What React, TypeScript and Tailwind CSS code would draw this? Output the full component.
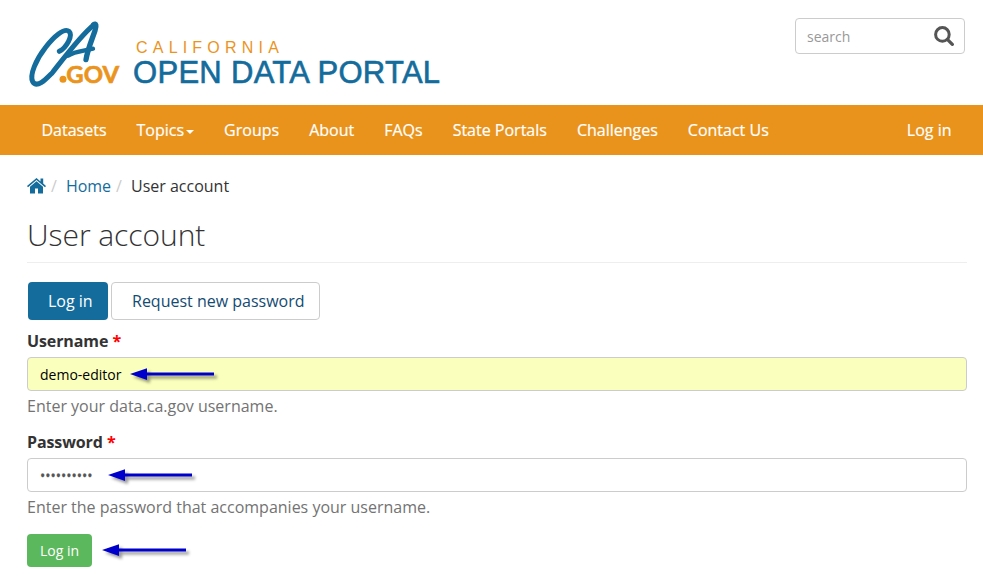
import React from 'react';

const navItems = ['Datasets', 'Topics', 'Groups', 'About', 'FAQs', 'State Portals', 'Challenges', 'Contact Us'];

function Logo() {
  return (
    <svg className="h-[80px] w-[100px]" viewBox="0 0 300 240" fill="none">
      <g stroke="#146c9c" strokeLinecap="round" strokeLinejoin="round">
        <path d="M103 109C124 98 145 62 132 49C118 37 85 67 62 97C33 134 13 180 23 200C37 222 65 190 82 173C125 118 170 58 207 29" strokeWidth="15" />
        <path d="M206 29C213 24 215 32 210 47C201 74 188 102 183 134" strokeWidth="16" />
        <path d="M129 122C148 109 174 108 204 101" strokeWidth="13" />
      </g>
      <circle cx="114" cy="193" r="10.5" fill="#eb941d" />
      <text x="124" y="203" textLength="158" lengthAdjust="spacingAndGlyphs" fill="#eb941d" stroke="#eb941d" strokeWidth="2" className="font-['Lato',sans-serif] text-[71px] font-bold">GOV</text>
    </svg>
  );
}

function Arrow() {
  return (
    <svg className="h-[20px] w-[92px]" viewBox="0 0 92 20" style={{ filter: 'drop-shadow(3px 3px 1.5px rgba(0,0,0,.4))' }}>
      <path d="M0 10L17 4.3V8.5H84V11.5H17V16Z" fill="#0000cc" />
    </svg>
  );
}

function HomeIcon() {
  return (
    <svg className="relative -top-px h-[16px] w-[19px] fill-[#146c9c]" viewBox="0 0 19 16">
      <path d="M9.5 3.3L3 8.8V15.5H8V10.5H11V15.5H16V8.8Z" />
      <path d="M9.5 0L0 8L1 9.2L9.5 2L18 9.2L19 8L16.2 5.6V0.5H13.5V3.4Z" />
    </svg>
  );
}

export default function App() {
  return (
    <div className="h-[583px] w-full overflow-hidden bg-white font-['Open_Sans','Noto_Sans',sans-serif] text-[16px] leading-[23px] text-[#333]">
      <header className="flex h-[105px] items-start justify-between pr-[18px] pl-[25px]">
        <div className="flex pt-[15px]">
          <Logo />
          <div className="ml-[8px] pt-[24px] font-['Liberation_Sans',Arial,sans-serif] whitespace-nowrap">
            <div className="ml-[3px] h-[17px] text-[16px] leading-[18px] tracking-[5.2px] text-[#eb941d]">CALIFORNIA</div>
            <div className="h-[34px] text-[31px] leading-[34px] tracking-[0.3px] text-[#146c9c] [-webkit-text-stroke:0.6px_#146c9c]">OPEN DATA PORTAL</div>
          </div>
        </div>
        <div className="mt-[18px] flex h-[36px] w-[170px] items-center justify-between rounded-[4px] border border-[#ccc] pr-[10px] pl-[11px]">
          <span className="text-[14px] text-[#999]">search</span>
          <svg className="h-[20px] w-[20px]" viewBox="0 0 20 20" fill="none" stroke="#555" strokeLinecap="round">
            <circle cx="8.4" cy="8.4" r="6.8" strokeWidth="3" />
            <path d="M13.6 13.6L18.3 18.3" strokeWidth="3.3" />
          </svg>
        </div>
      </header>

      <nav className="flex h-[50px] items-center justify-between bg-[#e9931c] pr-[31.5px] pl-[41.5px] text-white [-webkit-text-stroke:0.2px_white]">
        <ul className="flex gap-[30px] whitespace-nowrap">
          {navItems.map((item) => (
            <li key={item} className="flex items-center">
              {item}
              {item === 'Topics' && <span className="mt-[4px] ml-[2px] border-x-4 border-t-4 border-x-transparent border-t-white" />}
            </li>
          ))}
        </ul>
        <a>Log in</a>
      </nav>

      <main className="pr-[16px] pl-[27px]">
        <div className="mt-[20px] flex h-[23px] items-center">
          <HomeIcon />
          <span className="ml-[5px] text-[#ccc]">/</span>
          <a className="ml-[9px] text-[#146c9c]">Home</a>
          <span className="ml-[5px] text-[#ccc]">/</span>
          <span className="ml-[9px]">User account</span>
        </div>
        <h1 className="mt-[17px] h-[48px] border-b border-[#eee] text-[30px] leading-[40px] font-light tracking-[-0.05px]">User account</h1>

        <div className="mt-[19px] ml-px flex h-[38px] gap-[3px]">
          <a className="flex w-[80px] items-center rounded-[4px] bg-[#146c9c] pl-[20px] text-white">Log in</a>
          <a className="flex w-[209px] items-center rounded-[4px] border border-[#ccc] pl-[20px] text-[#134b73]">Request new password</a>
        </div>

        <form>
          <div className="mt-[10px] font-bold tracking-[-0.1px]">Username <span className="text-[#f00]">*</span></div>
          <div className="mt-[4px] flex h-[34px] items-center rounded-[4px] border border-[#ccc] bg-[#faffbd] pl-[12px] text-[14px] text-black">
            demo-editor
            <span className="ml-[9px] flex"><Arrow /></span>
          </div>
          <div className="mt-[4px] text-[#737373]">Enter your data.ca.gov username.</div>

          <div className="mt-[13px] font-bold tracking-[-0.1px]">Password <span className="text-[#f00]">*</span></div>
          <div className="mt-[4px] flex h-[34px] items-center rounded-[4px] border border-[#ccc] pl-[12px] text-[14px] text-[#555]">
            <span className="w-[53px] [-webkit-text-stroke:0.3px_#555]">••••••••••</span>
            <span className="ml-[15px] flex"><Arrow /></span>
          </div>
          <div className="mt-[4px] text-[#737373]">Enter the password that accompanies your username.</div>

          <div className="mt-[15px] flex items-center">
            <button type="button" className="h-[33px] w-[65px] rounded-[4px] bg-[#5cb85c] text-[14px] text-white">Log in</button>
            <span className="ml-[10px] flex pb-[1px]"><Arrow /></span>
          </div>
        </form>
      </main>
    </div>
  );
}
